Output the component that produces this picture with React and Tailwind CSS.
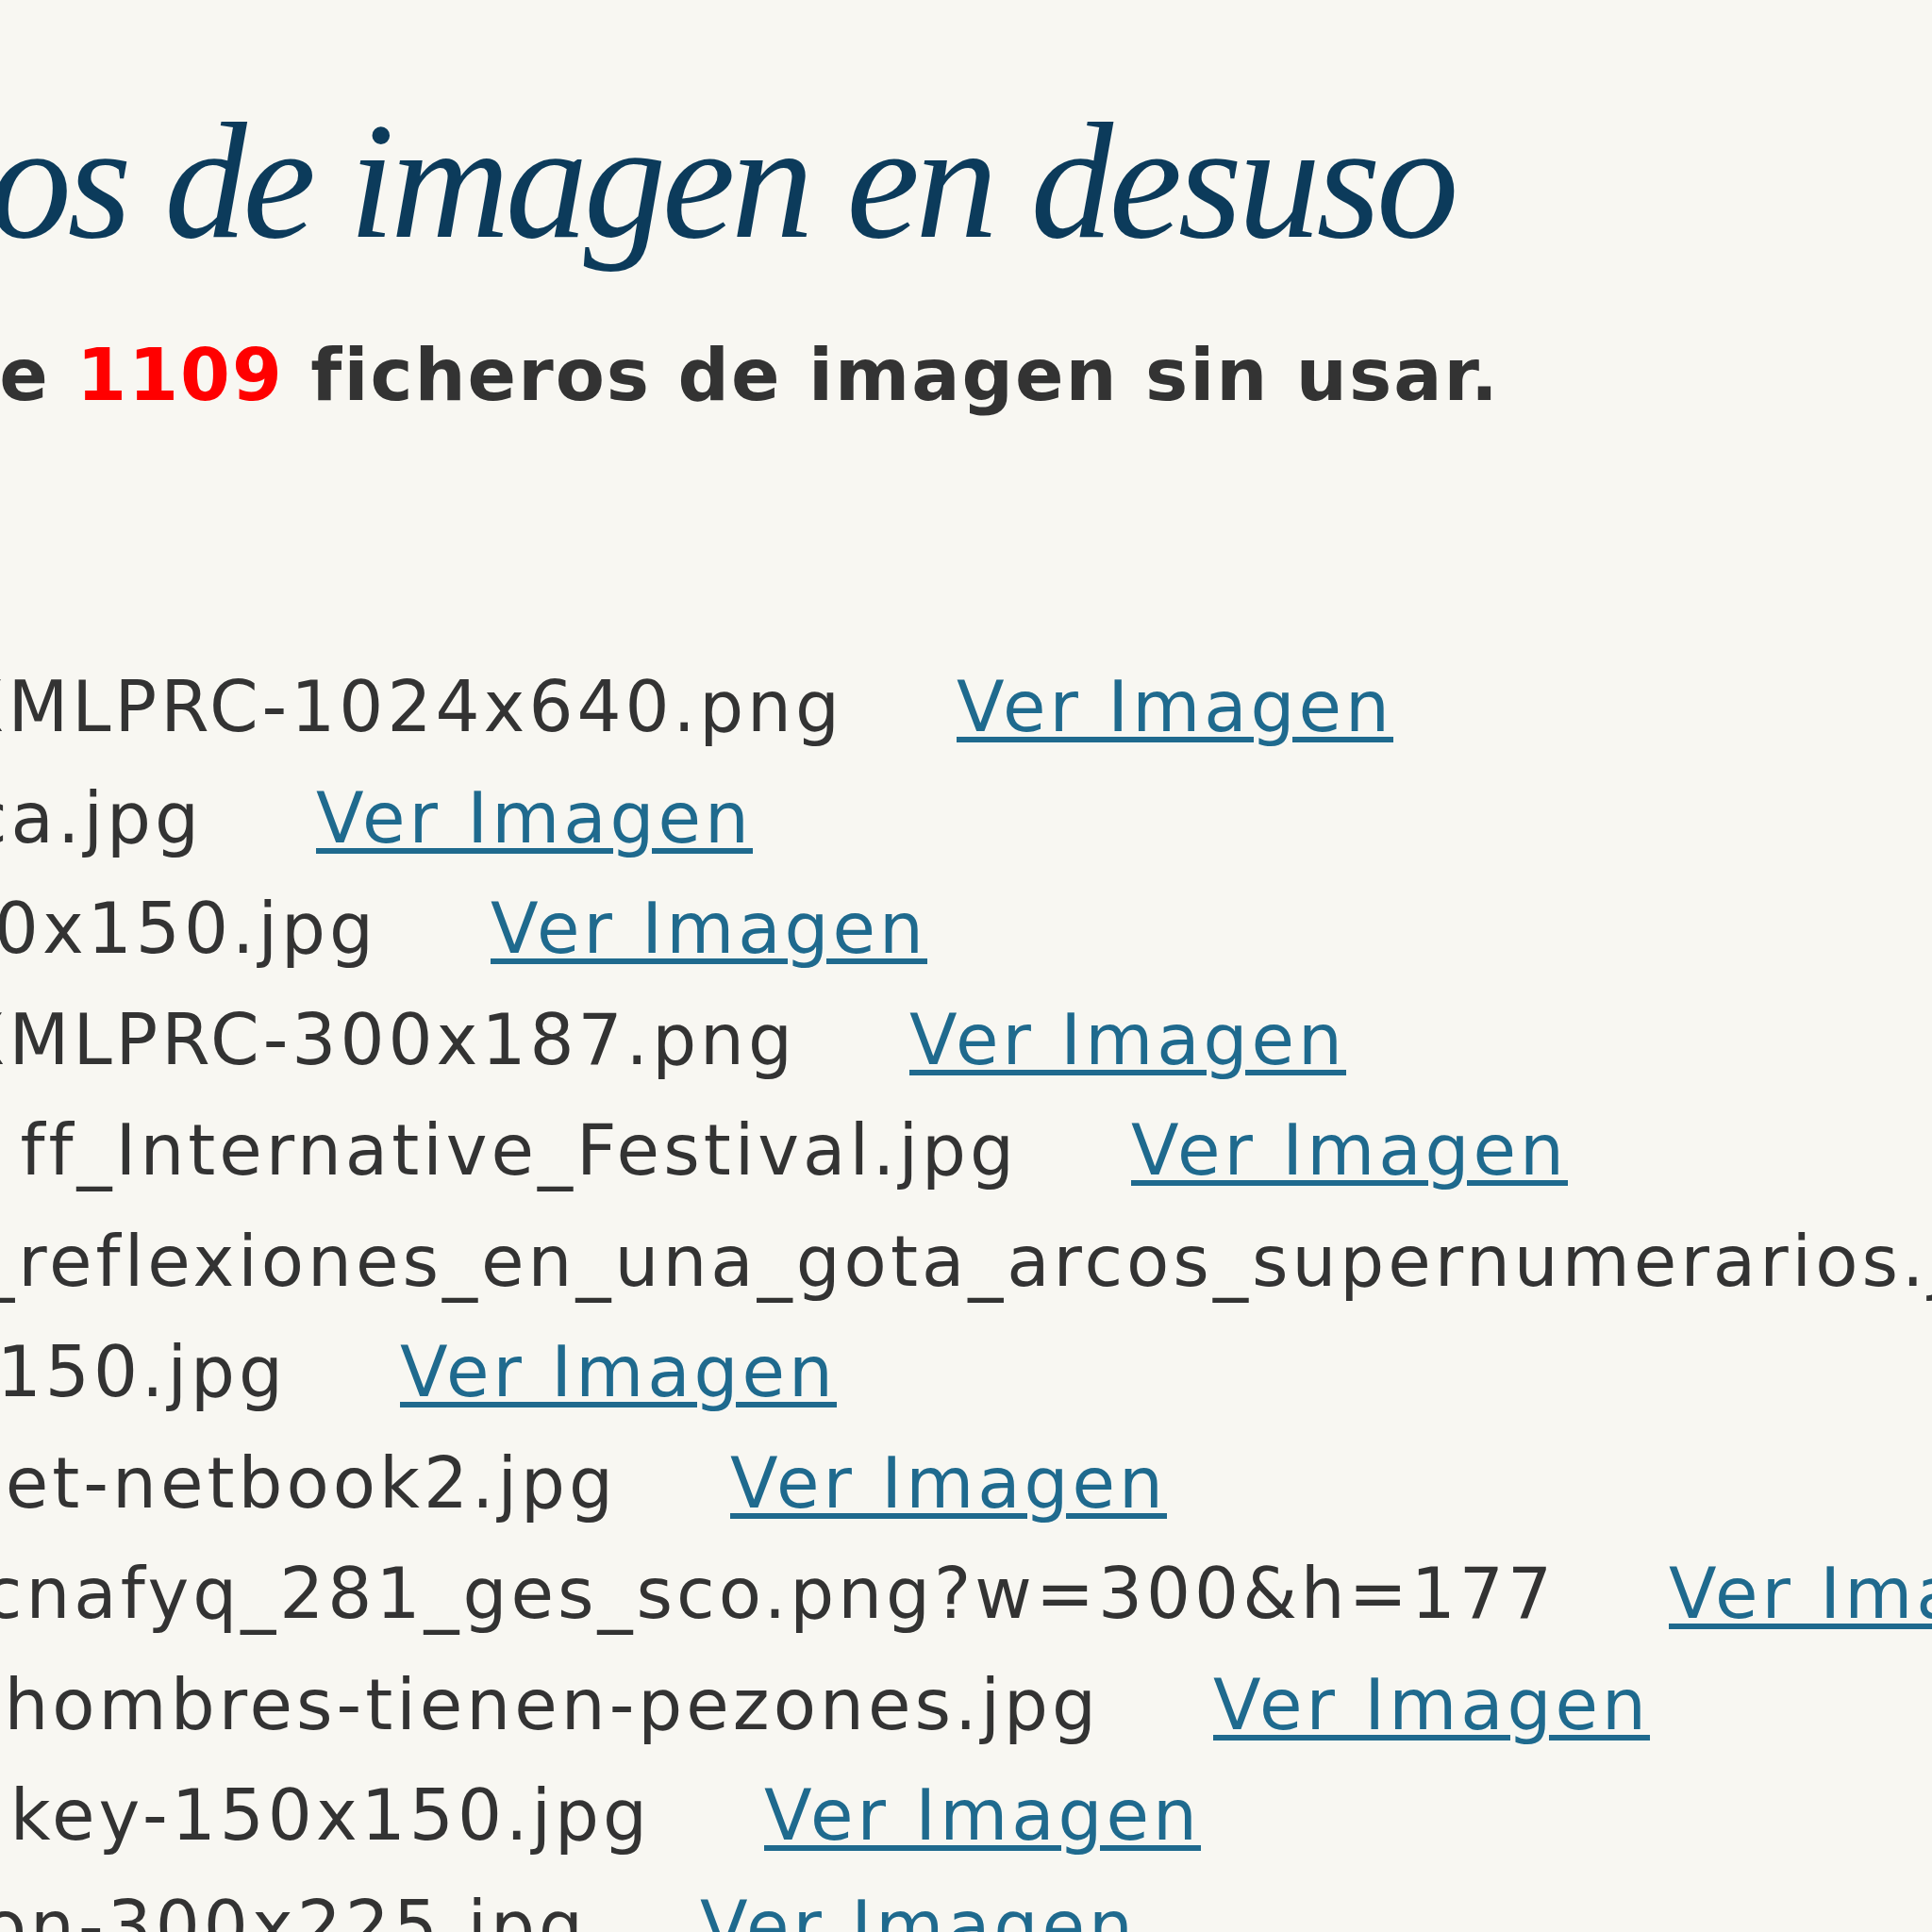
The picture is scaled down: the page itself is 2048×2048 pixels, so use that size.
const files = [
  { name: 'XMLPRC-1024x640.png', box: 'w-[894px]' },
  { name: 'ca.jpg', box: 'w-[215px]' },
  { name: '0x150.jpg', box: 'w-[400px]' },
  { name: 'XMLPRC-300x187.png', box: 'w-[844px]' },
  { name: 'ff_Internative_Festival.jpg', box: 'w-[1079px]' },
  { name: '_reflexiones_en_una_gota_arcos_supernumerarios.jpg', box: 'w-[2170px]' },
  { name: '150.jpg', box: 'w-[304px]' },
  { name: 'et-netbook2.jpg', box: 'w-[654px]' },
  { name: 'cnafyq_281_ges_sco.png?w=300&h=177', box: 'w-[1649px]' },
  { name: 'hombres-tienen-pezones.jpg', box: 'w-[1166px]' },
  { name: 'key-150x150.jpg', box: 'w-[690px]' },
  { name: 'on-300x225.jpg', box: 'w-[622px]' },
];

// right-aligned box: anything wider than the box spills off the left edge
const Clip = ({ box, children }) => (
  <div className={`${box} flex shrink-0 justify-end`}>
    <span className="shrink-0 whitespace-nowrap">{children}</span>
  </div>
);

export default function App() {
  return (
    <div className="h-screen w-full overflow-hidden bg-[#f8f7f2]">
      <div className="pt-[105px]">
        <Clip box="w-[1542px]">
          <h2 className="font-['Liberation_Serif',serif] text-[175px] italic leading-none tracking-[-4.5px] text-[#0c3b5b]">
            Ficheros de imagen en desuso
          </h2>
        </Clip>

        <div className="mt-[80px]">
          <Clip box="w-[1590px]">
            <p className="font-['DejaVu_Sans',sans-serif] text-[76px] font-bold leading-none tracking-[2px] text-[#333333]">
              Se han encontrado un total de <span className="text-[#ff0000]">1109</span> ficheros de imagen sin usar.
            </p>
          </Clip>
        </div>

        <ul className="mt-[255px] font-['DejaVu_Sans',sans-serif] text-[74px] leading-[117.5px] tracking-[4px]">
          {files.map((f) => (
            <li key={f.name} className="flex whitespace-nowrap">
              <Clip box={f.box}>
                <span className="text-[#333333]">{f.name}</span>
              </Clip>
              <a
                href="#"
                className="ml-[120px] shrink-0 text-[#1f6a8e] underline decoration-[6px] underline-offset-[6px]"
              >
                Ver Imagen
              </a>
            </li>
          ))}
        </ul>
      </div>
    </div>
  );
}
